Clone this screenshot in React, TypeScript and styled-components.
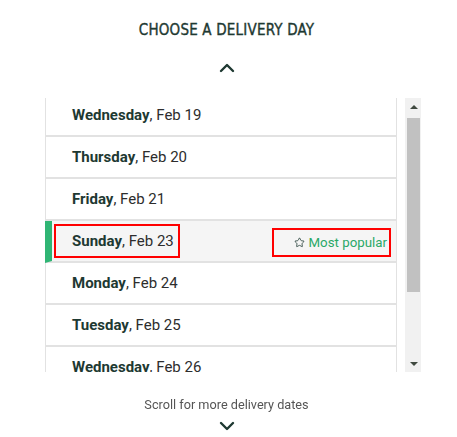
import { useLayoutEffect, useRef } from 'react'
import styled, { createGlobalStyle } from 'styled-components'
import { ChevronUp, ChevronDown, Star } from 'lucide-react'

const COLORS = {
  ink: '#1e3932',
  text: '#2d2d2d',
  muted: '#555555',
  line: '#e2e2e2',
  selectedBg: '#f5f5f5',
  green: '#2fb574',
  greenText: '#2aa868',
  mark: '#ff0000',
  track: '#f1f1f1',
  thumb: '#c1c1c1',
  arrow: '#404a40',
}

const ROW_HEIGHT = 42
const VIEW_HEIGHT = 274
const BUTTON_SIZE = 17
const START_SCROLL = 3

const GlobalStyle = createGlobalStyle`
  html, body {
    margin: 0;
    padding: 0;
    background: #ffffff;
  }
  body {
    font-family: Roboto, 'Liberation Sans', sans-serif;
    color: ${COLORS.text};
  }
`

const Page = styled.div`
  width: 453px;
  display: flex;
  flex-direction: column;
  align-items: center;
  padding-top: 20px;
`

const Heading = styled.h1`
  margin: 0;
  font-family: 'DejaVu Sans Condensed', 'DejaVu Sans', sans-serif;
  font-stretch: condensed;
  font-size: 15px;
  font-weight: 400;
  letter-spacing: 0.2px;
  line-height: 20px;
  color: ${COLORS.ink};
  -webkit-text-stroke: 0.35px ${COLORS.ink};
`

const ArrowButton = styled.div`
  display: flex;
  justify-content: center;
  color: ${COLORS.ink};
  height: 24px;
`

const UpArrow = styled(ArrowButton)`
  margin-top: 16px;
  margin-bottom: 18px;
`

const ListFrame = styled.div`
  align-self: flex-start;
  margin-left: 45px;
  display: flex;
  gap: 8px;
  height: ${VIEW_HEIGHT}px;
`

const ScrollArea = styled.div`
  height: 100%;
  overflow-y: auto;
  scrollbar-width: none;
  &::-webkit-scrollbar {
    display: none;
  }
`

const DayList = styled.ul`
  list-style: none;
  margin: 0;
  padding: 0;
  width: 352px;
`

const DayRow = styled.li<{ $selected?: boolean }>`
  display: flex;
  align-items: center;
  justify-content: space-between;
  height: ${ROW_HEIGHT - 2}px;
  border-bottom: 2px solid ${COLORS.line};
  border-right: 1px solid ${COLORS.line};
  border-left: ${(p) =>
    p.$selected ? `7px solid ${COLORS.green}` : `1px solid ${COLORS.line}`};
  padding-left: ${(p) => (p.$selected ? '2px' : '26px')};
  padding-right: 5px;
  background: ${(p) => (p.$selected ? COLORS.selectedBg : '#ffffff')};
  font-size: 15px;
  color: ${COLORS.text};
`

const DayName = styled.span`
  font-weight: 700;
  color: ${COLORS.ink};
`

const Marked = styled.span<{ $padLeft: number }>`
  display: inline-flex;
  align-items: center;
  gap: 3px;
  border: 2px solid ${COLORS.mark};
  padding: 0 4px 0 ${(p) => p.$padLeft}px;
  height: 30px;
`

const Popular = styled(Marked)`
  color: ${COLORS.greenText};
  font-size: 13.3px;
  height: 25px;
  padding-right: 2px;
  margin-top: 2px;
`

const Scrollbar = styled.div`
  width: 16px;
  height: 100%;
  display: flex;
  flex-direction: column;
  background: ${COLORS.track};
`

const BarButton = styled.div<{ $down?: boolean }>`
  height: ${BUTTON_SIZE}px;
  flex: none;
  display: flex;
  align-items: center;
  justify-content: center;
  padding-left: 1px;

  &::before {
    content: '';
    border-left: 4px solid transparent;
    border-right: 4px solid transparent;
    ${(p) =>
      p.$down
        ? `border-top: 4px solid ${COLORS.arrow};`
        : `border-bottom: 4px solid ${COLORS.arrow};`}
  }
`

const Track = styled.div`
  flex: 1;
  display: flex;
  flex-direction: column;
`

const Thumb = styled.div`
  margin: 0 1px 0 2px;
  background: ${COLORS.thumb};
`

const ScrollHint = styled.p`
  margin: 25px 0 0;
  font-size: 12.7px;
  line-height: 16px;
  color: ${COLORS.muted};
`

const DownArrow = styled(ArrowButton)`
  margin-top: 1px;
`

type Day = { name: string; date: string; popular?: boolean }

const days: Day[] = [
  { name: 'Wednesday', date: 'Feb 19' },
  { name: 'Thursday', date: 'Feb 20' },
  { name: 'Friday', date: 'Feb 21' },
  { name: 'Sunday', date: 'Feb 23', popular: true },
  { name: 'Monday', date: 'Feb 24' },
  { name: 'Tuesday', date: 'Feb 25' },
  { name: 'Wednesday', date: 'Feb 26' },
  { name: 'Thursday', date: 'Feb 27' },
  { name: 'Friday', date: 'Feb 28' },
]

export default function App() {
  const scrollRef = useRef<HTMLDivElement>(null)

  useLayoutEffect(() => {
    if (scrollRef.current) scrollRef.current.scrollTop = START_SCROLL
  }, [])

  const contentHeight = days.length * ROW_HEIGHT
  const trackHeight = VIEW_HEIGHT - BUTTON_SIZE * 2
  const thumbHeight = Math.round((VIEW_HEIGHT / contentHeight) * trackHeight)
  const thumbTop = Math.round((START_SCROLL / contentHeight) * trackHeight)

  return (
    <>
      <GlobalStyle />
      <Page>
        <Heading>CHOOSE A DELIVERY DAY</Heading>
        <UpArrow>
          <ChevronUp size={24} strokeWidth={2.4} />
        </UpArrow>
        <ListFrame>
          <ScrollArea ref={scrollRef}>
            <DayList>
              {days.map((d, i) => (
                <DayRow key={i} $selected={d.popular}>
                  {d.popular ? (
                    <>
                      <Marked $padLeft={16}>
                        <span>
                          <DayName>{d.name}</DayName>, {d.date}
                        </span>
                      </Marked>
                      <Popular $padLeft={20}>
                        <Star size={11} strokeWidth={1.7} color={COLORS.ink} />
                        Most popular
                      </Popular>
                    </>
                  ) : (
                    <span>
                      <DayName>{d.name}</DayName>, {d.date}
                    </span>
                  )}
                </DayRow>
              ))}
            </DayList>
          </ScrollArea>
          <Scrollbar>
            <BarButton />
            <Track>
              <Thumb style={{ marginTop: thumbTop + 1, height: thumbHeight }} />
            </Track>
            <BarButton $down />
          </Scrollbar>
        </ListFrame>
        <ScrollHint>Scroll for more delivery dates</ScrollHint>
        <DownArrow>
          <ChevronDown size={24} strokeWidth={2.4} />
        </DownArrow>
      </Page>
    </>
  )
}
